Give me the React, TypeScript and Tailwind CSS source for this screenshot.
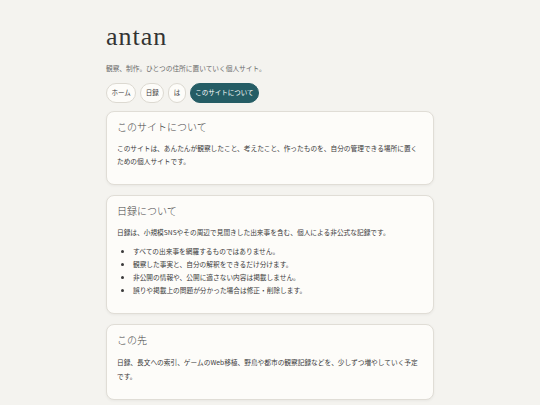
const jp = "font-['Noto_Sans_CJK_JP',_'Noto_Sans',_sans-serif]";

const navItems = [
  { label: "ホーム", active: false },
  { label: "日録", active: false },
  { label: "は", active: false },
  { label: "このサイトについて", active: true },
];

const Card = ({ title, children }: { title: string; children: React.ReactNode }) => (
  <section className="rounded-[8px] border border-[#e0ddd6] bg-[#fdfcf9] px-[10px] pb-[16px] pt-[8px] shadow-[0_1px_3px_rgba(0,0,0,0.05)]">
    <h2 className={`${jp} text-[10px] font-light leading-[14px] text-[#444]`}>{title}</h2>
    {children}
  </section>
);

export default function App() {
  return (
    <div className={`${jp} min-h-[405px] w-full bg-[#f4f3ef] text-[#3a3a3a]`}>
      <main className="mx-auto flex w-[328px] flex-col pt-[22px] pb-[20px]">
        <h1 className="font-['Liberation_Serif',_serif] text-[26px] leading-[30px] tracking-[1px] text-[#333]">
          antan
        </h1>
        <p className="mt-[10px] text-[6.7px] leading-[12px] text-[#6b6b6b]">
          観察、制作。ひとつの住所に置いていく個人サイト。
        </p>

        <nav className="mt-[9px] flex gap-[4px]">
          {navItems.map((item) => (
            <span
              key={item.label}
              className={`flex h-[20px] items-center rounded-full border px-[4.5px] text-[6.5px] ${
                item.active
                  ? "border-[#255d65] bg-[#255d65] text-white"
                  : "border-[#dcd9d1] bg-[#fdfcf9] text-[#3d3d3d]"
              }`}
            >
              {item.label}
            </span>
          ))}
        </nav>

        <div className="mt-[8px] flex flex-col gap-[10px]">
          <Card title="このサイトについて">
            <p className="mt-[8px] text-[6.7px] leading-[13px]">
              このサイトは、あんたんが観察したこと、考えたこと、作ったものを、自分の管理できる場所に置くための個人サイトです。
            </p>
          </Card>

          <Card title="日録について">
            <p className="mt-[8px] text-[6.7px] leading-[13px]">
              日録は、小規模SNSやその周辺で見聞きした出来事を含む、個人による非公式な記録です。
            </p>
            <ul className="mt-[6px] list-disc pl-[16px] text-[6.7px] leading-[13px]">
              <li>すべての出来事を網羅するものではありません。</li>
              <li>観察した事実と、自分の解釈をできるだけ分けます。</li>
              <li>非公開の情報や、公開に適さない内容は掲載しません。</li>
              <li>誤りや掲載上の問題が分かった場合は修正・削除します。</li>
            </ul>
          </Card>

          <Card title="この先">
            <p className="mt-[8px] text-[6.7px] leading-[14px]">
              日録、長文への索引、ゲームのWeb移植、野鳥や都市の観察記録などを、少しずつ増やしていく予定です。
            </p>
          </Card>
        </div>
      </main>
    </div>
  );
}
